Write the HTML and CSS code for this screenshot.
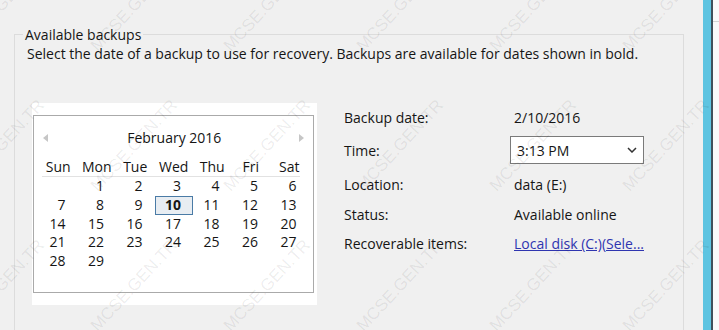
FILE: index.html
```html
<!DOCTYPE html>
<html lang="en">
<head>
    <meta charset="UTF-8">
    <title>Select Backup Date</title>
    <link rel="stylesheet" href="styles.css">
</head>
<body>
    <div class="window">
        <div class="main">
            <fieldset class="group">
                <legend>Available backups</legend>
                <p class="intro">Select the date of a backup to use for recovery. Backups are available for dates shown in bold.</p>

                <div class="content">
                    <div class="cal-wrap">
                        <div class="calendar">
                            <div class="cal-title">
                                <span class="arrow prev"></span>
                                <span>February 2016</span>
                                <span class="arrow next"></span>
                            </div>
                            <div class="weekdays">
                                <span>Sun</span><span>Mon</span><span>Tue</span><span>Wed</span><span>Thu</span><span>Fri</span><span>Sat</span>
                            </div>
                            <div class="divider"></div>
                            <div class="days">
                                <span></span><span>1</span><span>2</span><span>3</span><span>4</span><span>5</span><span>6</span>
                                <span>7</span><span>8</span><span>9</span><span class="sel">10</span><span>11</span><span>12</span><span>13</span>
                                <span>14</span><span>15</span><span>16</span><span>17</span><span>18</span><span>19</span><span>20</span>
                                <span>21</span><span>22</span><span>23</span><span>24</span><span>25</span><span>26</span><span>27</span>
                                <span>28</span><span>29</span>
                            </div>
                        </div>
                    </div>

                    <div class="details">
                        <span>Backup date:</span>
                        <span>2/10/2016</span>

                        <span>Time:</span>
                        <div class="combo">
                            <span>3:13 PM</span>
                            <svg width="10" height="6" viewBox="0 0 10 6"><polyline points="1,1 5,5 9,1" fill="none" stroke="#333" stroke-width="1.5"/></svg>
                        </div>

                        <span>Location:</span>
                        <span>data (E:)</span>

                        <span>Status:</span>
                        <span>Available online</span>

                        <span>Recoverable items:</span>
                        <a class="link" href="#">Local disk (C:)(Sele...</a>
                    </div>
                </div>
            </fieldset>
        </div>
        <div class="accent"></div>
        <div class="edge"><div class="edge-line"></div></div>

        <!-- watermark over the shot -->
        <div class="watermark">
            <span>MCSE.GEN.TR</span><span>MCSE.GEN.TR</span><span>MCSE.GEN.TR</span><span>MCSE.GEN.TR</span><span>MCSE.GEN.TR</span><span>MCSE.GEN.TR</span><span>MCSE.GEN.TR</span>
            <span>MCSE.GEN.TR</span><span>MCSE.GEN.TR</span><span>MCSE.GEN.TR</span><span>MCSE.GEN.TR</span><span>MCSE.GEN.TR</span><span>MCSE.GEN.TR</span><span>MCSE.GEN.TR</span>
            <span>MCSE.GEN.TR</span><span>MCSE.GEN.TR</span><span>MCSE.GEN.TR</span><span>MCSE.GEN.TR</span><span>MCSE.GEN.TR</span><span>MCSE.GEN.TR</span><span>MCSE.GEN.TR</span>
            <span>MCSE.GEN.TR</span><span>MCSE.GEN.TR</span><span>MCSE.GEN.TR</span><span>MCSE.GEN.TR</span><span>MCSE.GEN.TR</span><span>MCSE.GEN.TR</span><span>MCSE.GEN.TR</span>
        </div>
    </div>
</body>
</html>
```

FILE: styles.css
```css
* {
    box-sizing: border-box;
}

body {
    margin: 0;
    background: #f0f0f0;
    font-family: 'Open Sans', sans-serif;
    font-size: 14px;
    line-height: 19px;
    color: #151515;
}

.window {
    position: relative;
    display: flex;
    width: 719px;
    height: 330px;
    overflow: hidden;
}

.main {
    width: 703px;
    padding-left: 14px;
}

.group {
    margin: 25px 0 0;
    width: 670px;
    height: 360px;
    border: 1px solid #dcdcdc;
    padding: 0 0 0 12px;
    min-inline-size: 0;
}

.group legend {
    padding: 0 2px;
    margin-left: -4px;
    line-height: 19px;
}

.intro {
    margin: 0;
}

.content {
    display: flex;
    gap: 27px;
    margin-top: 40px;
    padding-left: 5px;
}

/* calendar */
.cal-wrap {
    background: #fff;
    padding: 12px 3px 12px 1px;
}

.calendar {
    width: 281px;
    height: 178px;
    border: 1px solid #aaaaaa;
    padding: 12px 3.5px 0 5px;
}

.cal-title {
    display: grid;
    grid-template-columns: 1fr auto 1fr;
    align-items: center;
    height: 19px;
}

.arrow {
    width: 0;
    height: 0;
    border-top: 4.5px solid transparent;
    border-bottom: 4.5px solid transparent;
}

.arrow.prev {
    justify-self: start;
    margin-left: 4px;
    border-right: 5px solid #c6c6c6;
}

.arrow.next {
    justify-self: end;
    margin-right: 6px;
    border-left: 5px solid #c6c6c6;
}

.weekdays {
    display: grid;
    grid-template-columns: repeat(7, 38.5px);
    height: 18px;
    line-height: 18px;
    margin-top: 11px;
    text-align: center;
}

.divider {
    height: 1px;
    width: 258px;
    margin-left: 3px;
    background: #e2e2e2;
}

.days {
    display: grid;
    grid-template-columns: repeat(7, 38.5px);
    grid-auto-rows: 18.75px;
    line-height: 18.75px;
    text-align: right;
}

.days span {
    padding-right: 12px;
}

.days .sel {
    font-weight: 700;
    border: 1px solid #4a7ba6;
    background: #e8edf2;
    line-height: 16.75px;
    padding-right: 11px;
}

/* details */
.details {
    display: grid;
    grid-template-columns: 170px 1fr;
    grid-template-rows: 28px 38px 30px 30px 28px;
    align-items: center;
    align-self: flex-start;
}

.combo {
    margin-left: -4px;
    width: 134px;
    height: 28px;
    border: 1px solid #7a7a7a;
    background: #fff;
    display: flex;
    align-items: center;
    justify-content: space-between;
    padding: 0 6px 0 6px;
}

.link {
    color: #2f35b0;
    text-decoration: underline;
}

/* right edge of the window */
.accent {
    width: 10px;
    background: #5ec4e1;
    border-right: 2px solid #3f505a;
}

.edge {
    flex: 1;
    background: #f9f9f9;
}

.edge-line {
    margin-top: 21px;
    border-top: 1px solid #d4d4d4;
}

.watermark {
    position: absolute;
    left: -66px;
    top: -65px;
    display: grid;
    grid-template-columns: repeat(7, 133px);
    grid-auto-rows: 140px;
    pointer-events: none;
}

.watermark span {
    display: flex;
    align-items: center;
    justify-content: center;
    font-family: 'Liberation Sans', sans-serif;
    font-size: 17px;
    color: rgba(0, 0, 0, 0.08);
    transform: rotate(-47deg);
}
```
